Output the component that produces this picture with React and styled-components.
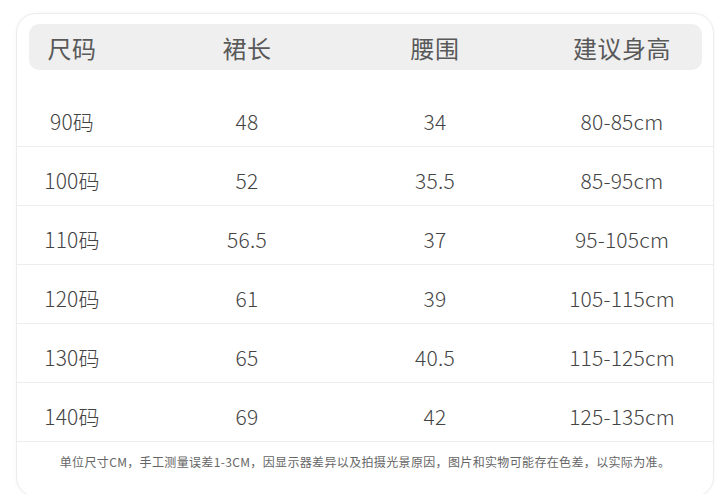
import React from 'react'
import styled, { createGlobalStyle } from 'styled-components'

const GlobalStyle = createGlobalStyle`
  html, body {
    margin: 0;
    padding: 0;
    background: #fff;
  }
  body {
    font-family: "Noto Sans CJK SC", "Noto Sans", sans-serif;
    color: #444;
  }
`

const Card = styled.div`
  box-sizing: border-box;
  width: 698px;
  height: 484px;
  margin: 13px 0 0 16px;
  padding-top: 10px;
  border: 1px solid #ececec;
  border-radius: 20px;
  box-shadow: 0 0 4px rgba(0, 0, 0, 0.04);
  background: #fff;
  overflow: hidden;
`

const Grid = styled.div`
  display: grid;
  grid-template-columns: ${props => props.cols};
  align-items: center;
  justify-items: center;

  & > :last-child {
    padding-left: ${props => props.lastPad}px;
  }
`

const Header = styled(Grid)`
  height: 46px;
  margin: 0 11px 18px 12px;
  border-radius: 10px;
  background: #efefef;
  font-size: 24px;
  font-weight: 400;
  color: #595959;
  letter-spacing: 0.5px;
`

const Row = styled(Grid)`
  box-sizing: border-box;
  height: 59px;
  padding-top: 8px;
  border-bottom: 1px solid #ededed;
  font-size: 21px;
  font-weight: 300;
  color: #444;
  letter-spacing: 0.2px;
`

const Cell = styled.div`
  box-sizing: border-box;
  width: 100%;
  text-align: center;
  white-space: nowrap;
`

const Note = styled.div`
  padding-top: 11px;
  text-align: center;
  font-size: 12px;
  color: #666;
  letter-spacing: 0.35px;
`

const headers = ['尺码', '裙长', '腰围', '建议身高']

const rows = [
  ['90码', '48', '34', '80-85cm'],
  ['100码', '52', '35.5', '85-95cm'],
  ['110码', '56.5', '37', '95-105cm'],
  ['120码', '61', '39', '105-115cm'],
  ['130码', '65', '40.5', '115-125cm'],
  ['140码', '69', '42', '125-135cm'],
]

export default function App() {
  return (
    <>
      <GlobalStyle />
      <Card>
        <Header cols="86px 264px 112px 1fr" lastPad={51}>
          {headers.map(h => <Cell key={h}>{h}</Cell>)}
        </Header>
        {rows.map(r => (
          <Row key={r[0]} cols="110px 240px 136px 1fr" lastPad={28}>
            {r.map((v, i) => <Cell key={i}>{v}</Cell>)}
          </Row>
        ))}
        <Note>单位尺寸CM，手工测量误差1-3CM，因显示器差异以及拍摄光景原因，图片和实物可能存在色差，以实际为准。</Note>
      </Card>
    </>
  )
}
